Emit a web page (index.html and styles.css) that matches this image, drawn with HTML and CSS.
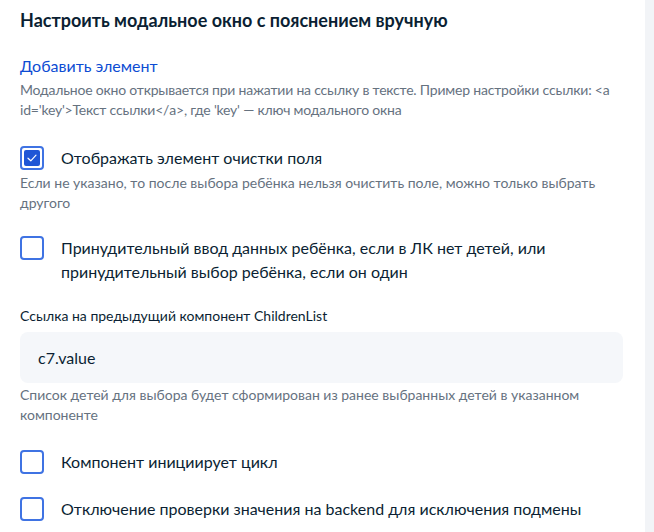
FILE: index.html
```html
<!DOCTYPE html>
<html lang="ru">
<head>
<meta charset="utf-8">
<link rel="stylesheet" href="styles.css">
</head>
<body>
<div class="page">
  <div class="panel">
    <h1 class="title">Настроить модальное окно с пояснением вручную</h1>
    <a class="link" href="#">Добавить элемент</a>
    <p class="hint hint-link">Модальное окно открывается при нажатии на ссылку в тексте. Пример настройки ссылки: &lt;a id='key'&gt;Текст ссылки&lt;/a&gt;, где 'key' — ключ модального окна</p>

    <label class="check check-1">
      <span class="box checked"><svg viewBox="0 0 10 8" width="9" height="7"><path d="M1 4.2 L3.8 6.8 L9 1.2" fill="none" stroke="#fff" stroke-width="1.2" stroke-linecap="round" stroke-linejoin="round"/></svg></span>
      <span class="check-text">Отображать элемент очистки поля</span>
    </label>
    <p class="hint hint-check">Если не указано, то после выбора ребёнка нельзя очистить поле, можно только выбрать другого</p>

    <label class="check check-2">
      <span class="box"></span>
      <span class="check-text">Принудительный ввод данных ребёнка, если в ЛК нет детей, или принудительный выбор ребёнка, если он один</span>
    </label>

    <div class="field-label">Ссылка на предыдущий компонент ChildrenList</div>
    <div class="input">c7.value</div>
    <p class="hint hint-input">Список детей для выбора будет сформирован из ранее выбранных детей в указанном компоненте</p>

    <label class="check check-3">
      <span class="box"></span>
      <span class="check-text">Компонент инициирует цикл</span>
    </label>

    <label class="check check-4">
      <span class="box"></span>
      <span class="check-text">Отключение проверки значения на backend для исключения подмены</span>
    </label>
  </div>
  <div class="strip"></div>
</div>
</body>
</html>
```

FILE: styles.css
```css
* { box-sizing: border-box; }
html, body { margin: 0; padding: 0; background: #fff; }
body {
  font-family: "Lato", "Noto Sans", sans-serif;
  color: #0b1f33;
}
.page {
  display: flex;
  width: 654px;
  height: 532px;
  overflow: hidden;
}
.panel {
  flex: 1;
  display: flex;
  flex-direction: column;
  align-items: flex-start;
  padding: 8px 22px 0 20px;
}
.strip {
  width: 9px;
  background: #f2f4f7;
}
.title {
  margin: 0;
  font-size: 18px;
  line-height: 24px;
  font-weight: 700;
  color: #0b1f33;
}
.link {
  margin-top: 22px;
  font-size: 16px;
  line-height: 24px;
  color: #0d4cd3;
  text-decoration: none;
}
.hint {
  margin: 0;
  font-size: 14px;
  line-height: 20px;
  color: #66727f;
}
.hint-link {
  margin-top: 2px;
  margin-right: -4px;
  letter-spacing: -0.2px;
}
.check {
  display: flex;
  align-items: flex-start;
  gap: 17px;
  font-size: 16px;
  line-height: 24px;
  color: #0b1f33;
}
.box {
  flex: none;
  width: 24px;
  height: 24px;
  border: 2px solid #3f73e3;
  border-radius: 4px;
  background: #fff;
  display: flex;
  align-items: center;
  justify-content: center;
}
.box.checked {
  padding: 2px;
}
.box.checked svg {
  display: block;
  width: 16px;
  height: 16px;
  padding: 4px 3px;
  background: #1f56d6;
  border-radius: 2px;
}
.check-1 { margin-top: 26px; }
.hint-check { margin-top: 3px; }
.check-2 { margin-top: 23px; }
.check-3 { margin-top: 25px; }
.check-4 { margin-top: 23px; }
.field-label {
  margin-top: 22px;
  font-size: 14px;
  line-height: 20px;
  color: #0b1f33;
}
.input {
  margin-top: 6px;
  align-self: stretch;
  height: 51px;
  background: #f5f7fa;
  border-radius: 8px;
  padding: 0 18px;
  display: flex;
  align-items: center;
  font-size: 16px;
  color: #0b1f33;
}
.hint-input { margin-top: 2px; }
```
